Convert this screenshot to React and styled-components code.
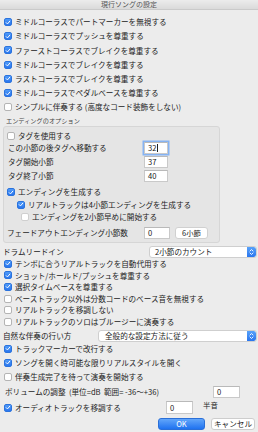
import styled, { createGlobalStyle } from "styled-components";

const GlobalStyle = createGlobalStyle`
  html, body {
    margin: 0;
    padding: 0;
    background: #ececec;
  }
  body {
    font-family: "Noto Sans CJK JP", sans-serif;
    overflow: hidden;
  }
`;

const Window = styled.div`
  width: 258px;
  height: 432px;
  background: #ececec;
  color: #222;
  font-size: 7.6px;
  line-height: 1;
  display: flex;
  flex-direction: column;
  overflow: hidden;
`;

const TitleBar = styled.div`
  height: 9px;
  border-bottom: 1px solid #cacaca;
  background: linear-gradient(#ececec, #dadada);
  display: flex;
  align-items: center;
  justify-content: center;
  font-size: 7px;
  color: #555;
`;

const Body = styled.div`
  display: flex;
  flex-direction: column;
  padding: 0 0 0 3px;
`;

const CheckList = styled.div`
  display: flex;
  flex-direction: column;
  margin-top: ${(p) => p.$top || 0}px;
`;

const CheckRow = styled.label`
  display: flex;
  align-items: center;
  gap: 3px;
  height: ${(p) => p.$h}px;
  padding-left: ${(p) => p.$indent || 1}px;
  white-space: nowrap;
`;

const Box = styled.span`
  flex: none;
  width: 8px;
  height: 8px;
  box-sizing: border-box;
  border-radius: 2px;
  display: flex;
  align-items: center;
  justify-content: center;
  background: ${(p) => (p.$on ? "linear-gradient(#4f9bf9, #2a76ee)" : "#fff")};
  border: 1px solid ${(p) => (p.$on ? "#2b73dd" : p.$dim ? "#cfcfcf" : "#b4b4b4")};
`;

const SectionLabel = styled.div`
  height: 8px;
  margin-top: 2.7px;
  padding-left: 3px;
  font-size: 6.2px;
  color: #444;
  display: flex;
  align-items: center;
`;

const Group = styled.div`
  width: 217px;
  box-sizing: border-box;
  margin-top: 1px;
  border: 1px solid #d6d6d6;
  border-radius: 3px;
  background: #e5e5e5;
  padding: 3px 0 3px 0;
  display: flex;
  flex-direction: column;
`;

const FieldRow = styled.div`
  display: flex;
  align-items: center;
  height: ${(p) => p.$h}px;
  margin-top: ${(p) => p.$top || 0}px;
  padding-left: ${(p) => p.$indent || 0}px;
`;

const FieldLabel = styled.span`
  flex: 0 0 ${(p) => p.$w}px;
  white-space: nowrap;
  color: #1e1e1e;
`;

const TextInput = styled.div`
  box-sizing: border-box;
  width: ${(p) => p.$w}px;
  height: ${(p) => p.$h || 12}px;
  background: #fff;
  border: 1px solid #c9c9c9;
  border-top-color: #b9b9b9;
  display: flex;
  align-items: center;
  padding-left: 3px;
  font-size: 7.6px;
  box-shadow: ${(p) => (p.$focus ? "0 0 0 1.5px #86b3f3" : "none")};
`;

const Caret = styled.span`
  width: 1px;
  height: 8px;
  background: #222;
  margin-left: 0.5px;
`;

const SmallButton = styled.div`
  box-sizing: border-box;
  width: ${(p) => p.$w}px;
  height: 12px;
  margin-left: ${(p) => p.$left || 0}px;
  background: #fff;
  border: 1px solid #d0d0d0;
  border-radius: 3px;
  display: flex;
  align-items: center;
  justify-content: center;
  font-size: 7.4px;
`;

const SelectRow = styled.div`
  display: flex;
  align-items: center;
  justify-content: space-between;
  height: 12px;
  margin-top: ${(p) => p.$top || 0}px;
  padding-right: 1px;
`;

const Select = styled.div`
  box-sizing: border-box;
  width: ${(p) => p.$w}px;
  height: 12px;
  background: #fff;
  border: 1px solid #cfcfcf;
  border-radius: 3px;
  display: flex;
  align-items: center;
  justify-content: space-between;
  padding-left: ${(p) => p.$pad}px;
  overflow: hidden;
`;

const Stepper = styled.span`
  flex: none;
  width: 9px;
  height: 10px;
  margin-right: 0;
  background: linear-gradient(#58a2fa, #2a76ee);
  border-radius: 0 2px 2px 0;
  display: flex;
  align-items: center;
  justify-content: center;
`;

const VolumeRow = styled.div`
  display: flex;
  align-items: center;
  height: 12px;
  margin-top: 2px;
  padding-left: 2px;
`;

const AudioRow = styled.div`
  display: flex;
  align-items: center;
  height: 14px;
  margin-top: 3px;
`;

const Unit = styled.span`
  align-self: flex-start;
  margin-left: 10px;
  margin-top: 0px;
  font-size: 7.4px;
`;

const Buttons = styled.div`
  display: flex;
  justify-content: flex-end;
  gap: 6px;
  margin-top: 3px;
  padding-right: 3px;
`;

const DialogButton = styled.div`
  box-sizing: border-box;
  width: ${(p) => p.$w}px;
  height: 12px;
  border-radius: 3px;
  display: flex;
  align-items: center;
  justify-content: center;
  font-size: 7.6px;
  background: ${(p) => (p.$primary ? "linear-gradient(#62a6fa, #1f72f0)" : "#fff")};
  color: ${(p) => (p.$primary ? "#fff" : "#222")};
  border: 1px solid ${(p) => (p.$primary ? "#2a6fd8" : "#cdcdcd")};
`;

function Check({ on, dim, label, h, indent }) {
  return (
    <CheckRow $h={h} $indent={indent}>
      <Box $on={on} $dim={dim}>
        {on && (
          <svg width="7" height="7" viewBox="0 0 8 8">
            <path d="M1.6 4.2 L3.3 5.9 L6.4 2.2" fill="none" stroke="#fff" strokeWidth="1.3" strokeLinecap="round" strokeLinejoin="round" />
          </svg>
        )}
      </Box>
      <span>{label}</span>
    </CheckRow>
  );
}

function Arrows() {
  return (
    <Stepper>
      <svg width="5" height="8" viewBox="0 0 5 8">
        <path d="M1 3 L2.5 1.5 L4 3 M1 5 L2.5 6.5 L4 5" fill="none" stroke="#fff" strokeWidth="0.9" strokeLinecap="round" strokeLinejoin="round" />
      </svg>
    </Stepper>
  );
}

const topChecks = [
  [true, "ミドルコーラスでパートマーカーを無視する"],
  [true, "ミドルコーラスでプッシュを尊重する"],
  [true, "ファーストコーラスでブレイクを尊重する"],
  [true, "ミドルコーラスでブレイクを尊重する"],
  [true, "ラストコーラスでブレイクを尊重する"],
  [true, "ミドルコーラスでペダルベースを尊重する"],
  [false, "シンプルに伴奏する (高度なコード装飾をしない)"],
];

const tagFields = [
  ["この小節の後タグへ移動する", "32", true],
  ["タグ開始小節", "37", false],
  ["タグ終了小節", "40", false],
];

const midChecks = [
  [true, "テンポに合うリアルトラックを自動代用する"],
  [true, "ショット/ホールド/プッシュを尊重する"],
  [true, "選択タイムベースを尊重する"],
  [false, "ベーストラック以外は分数コードのベース音を無視する"],
  [false, "リアルトラックを移調しない"],
  [false, "リアルトラックのソロはブルージーに演奏する"],
];

const lowChecks = [
  [true, "トラックマーカーで改行する"],
  [true, "ソングを開く時可能な限りリアルスタイルを開く"],
  [false, "伴奏生成完了を待って演奏を開始する"],
];

export default function App() {
  return (
    <Window>
      <GlobalStyle />
      <TitleBar>現行ソングの設定</TitleBar>
      <Body>
        <CheckList $top={5}>
          {topChecks.map(([on, label]) => (
            <Check key={label} on={on} label={label} h={14.2} />
          ))}
        </CheckList>

        <SectionLabel>エンディングのオプション</SectionLabel>
        <Group>
          <Check on={false} label="タグを使用する" h={11} indent={3} />
          {tagFields.map(([label, value, focus]) => (
            <FieldRow key={label} $h={14} $indent={4}>
              <FieldLabel $w={136}>{label}</FieldLabel>
              <TextInput $w={24} $focus={focus}>
                {value}
                {focus && <Caret />}
              </TextInput>
            </FieldRow>
          ))}
          <CheckList $top={3}>
            <Check on label="エンディングを生成する" h={12.5} indent={3} />
            <Check on label="リアルトラックは4小節エンディングを生成する" h={12.5} indent={13} />
            <Check on={false} dim label="エンディングを2小節早めに開始する" h={12.5} indent={17} />
          </CheckList>
          <FieldRow $h={12} $top={3.5} $indent={3}>
            <FieldLabel $w={137}>フェードアウトエンディング小節数</FieldLabel>
            <TextInput $w={26}>0</TextInput>
            <SmallButton $w={33} $left={5}>6小節</SmallButton>
          </FieldRow>
        </Group>

        <SelectRow $top={3}>
          <span>ドラムリードイン</span>
          <Select $w={108} $pad={5}>
            <span>2小節のカウント</span>
            <Arrows />
          </Select>
        </SelectRow>

        <CheckList>
          {midChecks.map(([on, label]) => (
            <Check key={label} on={on} label={label} h={11.6} />
          ))}
        </CheckList>

        <SelectRow $top={2.4}>
          <span>自然な伴奏の行い方</span>
          <Select $w={159} $pad={6}>
            <span>全般的な設定方法に従う</span>
            <Arrows />
          </Select>
        </SelectRow>

        <CheckList>
          {lowChecks.map(([on, label]) => (
            <Check key={label} on={on} label={label} h={14} />
          ))}
        </CheckList>

        <VolumeRow>
          <FieldLabel $w={208}>ボリュームの調整&nbsp;&nbsp;(単位=dB&nbsp;&nbsp;範囲= -36〜+36)</FieldLabel>
          <TextInput $w={27}>0</TextInput>
        </VolumeRow>

        <AudioRow>
          <FieldLabel $w={163}>
            <Check on label="オーディオトラックを移調する" h={14} />
          </FieldLabel>
          <TextInput $w={27} $h={13}>0</TextInput>
          <Unit>半音</Unit>
        </AudioRow>

        <Buttons>
          <DialogButton $w={47} $primary>OK</DialogButton>
          <DialogButton $w={44}>キャンセル</DialogButton>
        </Buttons>
      </Body>
    </Window>
  );
}
